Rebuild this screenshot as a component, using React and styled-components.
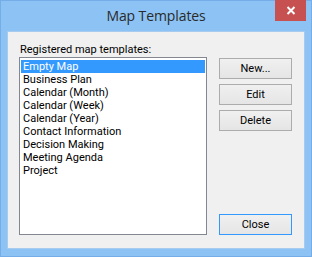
import React, { useState } from "react";
import styled, { createGlobalStyle } from "styled-components";

const GlobalStyle = createGlobalStyle`
  html, body {
    margin: 0;
    padding: 0;
    background: #ffffff;
  }
  body {
    font-family: Roboto, "Open Sans", "Liberation Sans", sans-serif;
    -webkit-font-smoothing: antialiased;
  }
`;

const Window = styled.div`
  width: 312px;
  height: 257px;
  box-sizing: border-box;
  background: #8cc3f4;
  border: 1px solid #74ade8;
  display: flex;
  flex-direction: column;
  padding: 0 6px 7px 6px;
`;

const TitleBar = styled.div`
  height: 30px;
  flex-shrink: 0;
  position: relative;
  display: flex;
  align-items: center;
  justify-content: center;
`;

const Title = styled.div`
  font-family: "Open Sans", sans-serif;
  font-size: 14px;
  color: #2a2a2a;
  margin-top: -1px;
  letter-spacing: -0.1px;
`;

const CloseX = styled.div`
  position: absolute;
  top: -1px;
  right: -1px;
  width: 31px;
  height: 21px;
  background: #c75050;
  display: flex;
  align-items: center;
  justify-content: center;
`;

const Client = styled.div`
  flex: 1;
  background: #f0f0f0;
  border: 1px solid #a6cbee;
  display: flex;
  gap: 12px;
  padding: 11px 12px 13px 11px;
`;

const LeftCol = styled.div`
  display: flex;
  flex-direction: column;
`;

const Label = styled.div`
  font-size: 11px;
  line-height: 14px;
  height: 14px;
  color: #000;
  padding-left: 1px;
`;

const ListBox = styled.ul`
  list-style: none;
  margin: 0;
  width: 188px;
  box-sizing: border-box;
  flex: 1;
  background: #ffffff;
  border: 1px solid #828790;
  padding: 2px 1px 1px 1px;
`;

const Item = styled.li`
  height: 13px;
  line-height: 13px;
  font-size: 11px;
  padding-left: 2px;
  color: ${(p) => (p.$selected ? "#ffffff" : "#000000")};
  background: ${(p) => (p.$selected ? "#3399ff" : "transparent")};
  white-space: nowrap;
`;

const RightCol = styled.div`
  display: flex;
  flex-direction: column;
  padding-top: 15px;
  gap: 5px;
`;

const Button = styled.button`
  width: 73px;
  height: 21px;
  box-sizing: border-box;
  font-family: inherit;
  font-size: 11px;
  color: #000;
  padding: 0;
  border: 1px solid ${(p) => (p.$default ? "#3399ff" : "#acacac")};
  background: linear-gradient(#f0f0f0, #e5e5e5);
  ${(p) => (p.$default ? "margin-top: auto;" : "")}
`;

const templates = [
  "Empty Map",
  "Business Plan",
  "Calendar (Month)",
  "Calendar (Week)",
  "Calendar (Year)",
  "Contact Information",
  "Decision Making",
  "Meeting Agenda",
  "Project",
];

export default function App() {
  const [selected, setSelected] = useState(0);
  return (
    <>
      <GlobalStyle />
      <Window>
        <TitleBar>
          <Title>Map Templates</Title>
          <CloseX>
            <svg width="10" height="9" viewBox="0 0 10 9">
              <path d="M1.5 1 L8.5 8 M8.5 1 L1.5 8" stroke="#fff" strokeWidth="2" />
            </svg>
          </CloseX>
        </TitleBar>
        <Client>
          <LeftCol>
            <Label>Registered map templates:</Label>
            <ListBox>
              {templates.map((t, i) => (
                <Item key={t} $selected={i === selected} onClick={() => setSelected(i)}>
                  {t}
                </Item>
              ))}
            </ListBox>
          </LeftCol>
          <RightCol>
            <Button>New...</Button>
            <Button>Edit</Button>
            <Button>Delete</Button>
            <Button $default>Close</Button>
          </RightCol>
        </Client>
      </Window>
    </>
  );
}
